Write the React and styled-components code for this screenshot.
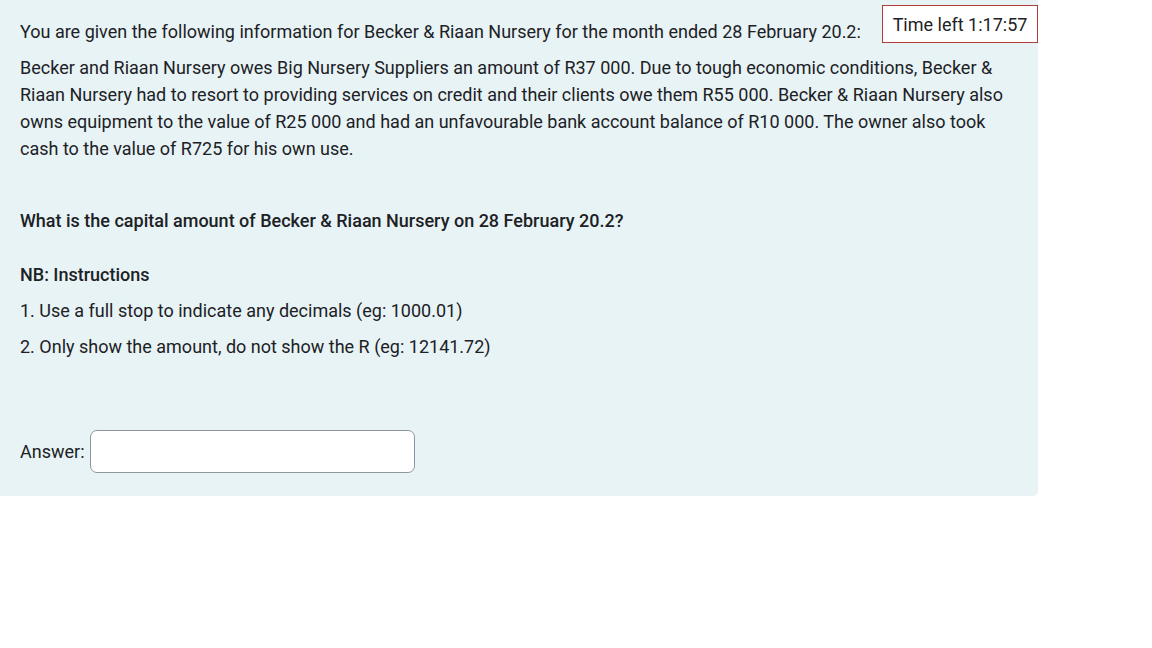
import React from "react";
import styled, { createGlobalStyle } from "styled-components";

const GlobalStyle = createGlobalStyle`
  body {
    margin: 0;
    background: #ffffff;
    font-family: Roboto, "Liberation Sans", sans-serif;
    color: #1d2125;
  }
`;

const Page = styled.div`
  position: relative;
  width: 1152px;
  height: 648px;
`;

const Panel = styled.div`
  width: 1038px;
  box-sizing: border-box;
  background: #e7f3f5;
  border-bottom-right-radius: 5px;
  padding: 18px 20px 23px 20px;
  font-size: 18px;
  line-height: 27px;
`;

const Para = styled.p`
  margin: 0 0 ${(p) => p.gap || 9}px 0;
  font-weight: ${(p) => (p.bold ? 500 : 400)};
`;

const Timer = styled.div`
  position: absolute;
  top: 5px;
  left: 882px;
  width: 156px;
  height: 38px;
  box-sizing: border-box;
  background: #ffffff;
  border: 1px solid #b03a36;
  font-size: 18px;
  display: flex;
  align-items: center;
  justify-content: center;
`;

const AnswerRow = styled.div`
  display: flex;
  align-items: center;
  gap: 5px;
`;

const Label = styled.label`
  font-size: 18px;
`;

const Input = styled.input`
  width: 325px;
  height: 43px;
  box-sizing: border-box;
  border: 1px solid #8f959e;
  border-radius: 7px;
  background: #ffffff;
  font-family: inherit;
  font-size: 18px;
  padding: 0 10px;
`;

export default function App() {
  return (
    <Page>
      <GlobalStyle />
      <Panel>
        <Para>
          You are given the following information for Becker &amp; Riaan Nursery for the month ended 28 February 20.2:
        </Para>
        <Para gap={45}>
          Becker and Riaan Nursery owes Big Nursery Suppliers an amount of R37 000. Due to tough economic conditions, Becker &amp; Riaan Nursery had to resort to providing services on credit and their clients owe them R55 000. Becker &amp; Riaan Nursery also owns equipment to the value of R25 000 and had an unfavourable bank account balance of R10 000. The owner also took cash to the value of R725 for his own use.
        </Para>
        <Para bold gap={27}>
          What is the capital amount of Becker &amp; Riaan Nursery on 28 February 20.2?
        </Para>
        <Para bold>NB: Instructions</Para>
        <Para>1. Use a full stop to indicate any decimals (eg: 1000.01)</Para>
        <Para gap={70}>2. Only show the amount, do not show the R (eg: 12141.72)</Para>
        <AnswerRow>
          <Label htmlFor="answer">Answer:</Label>
          <Input id="answer" type="text" />
        </AnswerRow>
      </Panel>
      <Timer>Time left 1:17:57</Timer>
    </Page>
  );
}
